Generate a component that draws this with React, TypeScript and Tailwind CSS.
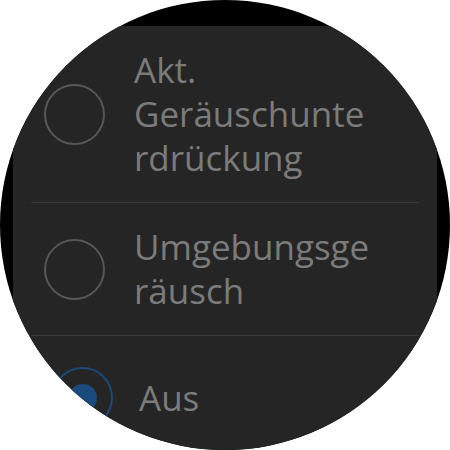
export default function App() {
  const font = { fontFamily: '"Open Sans", "Noto Sans", sans-serif' };
  return (
    <div className="w-[450px] h-[450px] bg-white">
      <div className="w-[450px] h-[450px] rounded-full bg-black overflow-hidden pt-[26px] px-[13px]">
        <div className="h-full bg-[#252525] px-[18px]" style={font}>
          <div className="flex items-center py-[22px]">
            <div className="ml-[13px] w-[61px] h-[61px] shrink-0 rounded-full border-2 border-[#575757]" />
            <div className="ml-[29px] text-[35px] leading-[44px] text-[#7b7b7b]">
              Akt.<br />Geräuschunte<br />rdrückung
            </div>
          </div>
          <div className="h-px bg-[#3a3a3a]" />
          <div className="flex items-center py-[22px]">
            <div className="ml-[13px] w-[61px] h-[61px] shrink-0 rounded-full border-2 border-[#575757]" />
            <div className="ml-[29px] text-[35px] leading-[44px] text-[#7b7b7b]">
              Umgebungsge<br />räusch
            </div>
          </div>
          <div className="h-px bg-[#3a3a3a]" />
          <div className="flex items-center pt-[31px]">
            <div className="ml-[21px] w-[61px] h-[61px] shrink-0 rounded-full border-2 border-[#1c4a78] flex items-center justify-center">
              <div className="w-[28px] h-[28px] rounded-full bg-[#1b4b7d]" />
            </div>
            <div className="ml-[26px] text-[35px] leading-[44px] text-[#7b7b7b]">Aus</div>
          </div>
        </div>
      </div>
    </div>
  );
}
